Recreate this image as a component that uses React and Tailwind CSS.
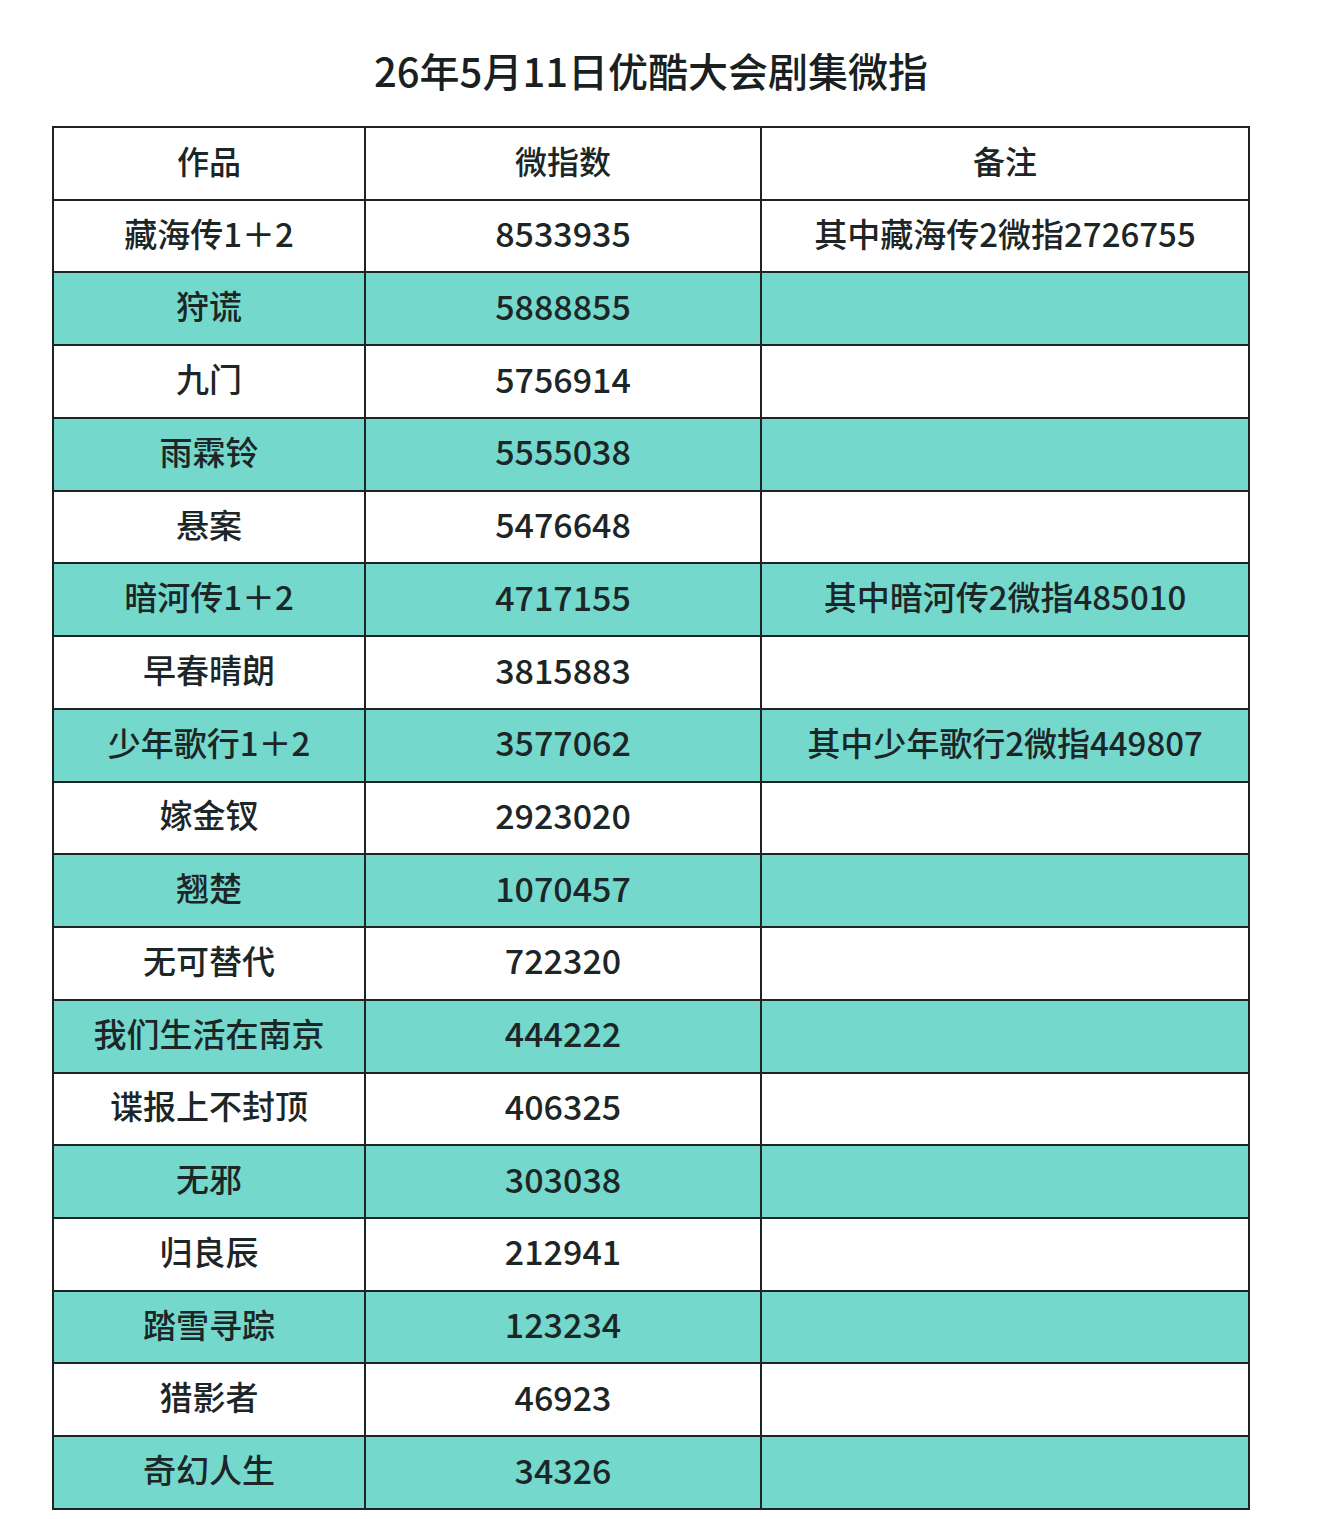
import React from "react";

const rows = [
  ["藏海传1＋2", "8533935", "其中藏海传2微指2726755"],
  ["狩谎", "5888855", ""],
  ["九门", "5756914", ""],
  ["雨霖铃", "5555038", ""],
  ["悬案", "5476648", ""],
  ["暗河传1＋2", "4717155", "其中暗河传2微指485010"],
  ["早春晴朗", "3815883", ""],
  ["少年歌行1＋2", "3577062", "其中少年歌行2微指449807"],
  ["嫁金钗", "2923020", ""],
  ["翘楚", "1070457", ""],
  ["无可替代", "722320", ""],
  ["我们生活在南京", "444222", ""],
  ["谍报上不封顶", "406325", ""],
  ["无邪", "303038", ""],
  ["归良辰", "212941", ""],
  ["踏雪寻踪", "123234", ""],
  ["猎影者", "46923", ""],
  ["奇幻人生", "34326", ""],
];

function Row({ cells, teal, header }) {
  const bg = teal ? "bg-[#74d8cd]" : "bg-white";
  return (
    <div className={`grid grid-cols-[312px_396px_1fr] h-[72.74px] border-b-2 border-[#1e2424] ${bg}`}>
      {cells.map((c, i) => (
        <div
          key={i}
          className={`flex items-center justify-center pb-[6px] ${i < 2 ? "border-r-2 border-[#1e2424]" : ""}`}
        >
          <span
            className={`${header ? "text-[32px]" : i === 1 ? "text-[34px]" : "text-[33px]"} font-medium text-[#1c2626] leading-none`}
          >
            {c}
          </span>
        </div>
      ))}
    </div>
  );
}

export default function App() {
  return (
    <div
      className="w-[1320px] h-[1519px] bg-white overflow-hidden"
      style={{ fontFamily: '"Noto Sans CJK SC", "Noto Sans", sans-serif' }}
    >
      <div className="h-[126px] flex items-center justify-center">
        <h1 className="text-[40px] font-medium text-[#1a1f1f] leading-none mt-[14px] mr-[18px]">
          26年5月11日优酷大会剧集微指
        </h1>
      </div>
      <div className="ml-[52px] w-[1198px] border-t-2 border-l-2 border-r-2 border-[#1e2424]">
        <Row cells={["作品", "微指数", "备注"]} header />
        {rows.map((r, i) => (
          <Row key={i} cells={r} teal={i % 2 === 1} />
        ))}
      </div>
    </div>
  );
}
